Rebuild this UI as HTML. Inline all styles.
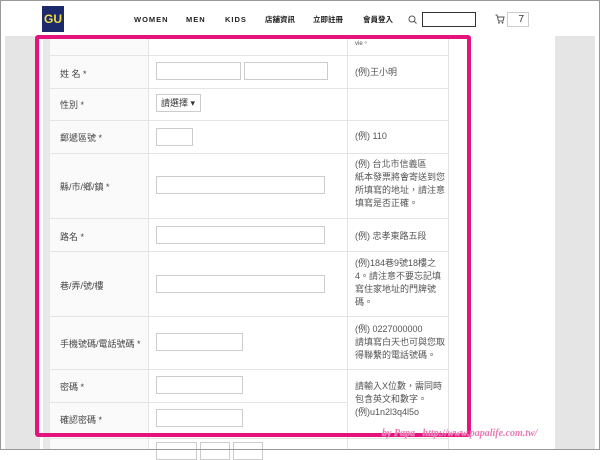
<!DOCTYPE html>
<html><head><meta charset="utf-8"><style>
*{margin:0;padding:0;box-sizing:border-box}
body{width:600px;height:450px;overflow:hidden;background:#fff;position:relative;font-family:"Liberation Sans","Noto Sans CJK TC",sans-serif;color:#444}
.a{position:absolute}
.frame{position:absolute;left:0;top:0;width:600px;height:450px;border:1px solid #999;pointer-events:none}
.nav{font-size:7.5px;font-weight:bold;color:#222;letter-spacing:1px}
.inp{position:absolute;border:1px solid #ccc;background:#fff;height:18px}
.l{position:absolute;font-size:9px;color:#444}
.e{position:absolute;font-size:9px;color:#555;line-height:13px}
.h{position:absolute;left:50px;width:398px;height:1px;background:#e4e4e4}
</style></head><body>
<div class="a" style="left:5px;top:36px;width:590px;height:414px;background:#e5e5e5"></div>
<div class="a" style="left:40px;top:36px;width:515px;height:414px;background:#fff"></div>
<div class="a" style="left:43px;top:36px;width:7px;height:414px;background:#e8e8e8"></div>
<div class="a" style="left:50px;top:36px;width:99px;height:414px;background:#fafafa"></div>
<div class="a" style="left:148px;top:36px;width:1px;height:414px;background:#e4e4e4"></div>
<div class="a" style="left:347px;top:36px;width:1px;height:414px;background:#e4e4e4"></div>
<div class="a" style="left:448px;top:36px;width:1px;height:414px;background:#e4e4e4"></div>
<div class="h" style="top:55px"></div><div class="h" style="top:88px"></div><div class="h" style="top:120px"></div><div class="h" style="top:153px"></div><div class="h" style="top:218px"></div><div class="h" style="top:251px"></div><div class="h" style="top:316px"></div><div class="h" style="top:369px"></div><div class="h" style="top:402px;width:298px"></div><div class="h" style="top:438px"></div>
<!-- header -->
<div class="a" style="left:42px;top:6px;width:22px;height:26px;background:#1c2a6b;color:#f0e040;font-weight:bold;font-size:12px;text-align:center;line-height:26px">GU</div>
<div class="a nav" style="left:134px;top:15px">WOMEN</div>
<div class="a nav" style="left:186px;top:15px">MEN</div>
<div class="a nav" style="left:225px;top:15px">KIDS</div>
<div class="a nav" style="left:265px;top:14px;letter-spacing:0">店舖資訊</div>
<div class="a nav" style="left:313px;top:14px;letter-spacing:0">立即註冊</div>
<div class="a nav" style="left:363px;top:14px;letter-spacing:0">會員登入</div>
<svg class="a" style="left:408px;top:15px" width="9" height="9"><circle cx="4" cy="4" r="3" fill="none" stroke="#555" stroke-width="1"/><path d="M6 6L8.5 8.5" stroke="#555"/></svg>
<div class="a" style="left:422px;top:12px;width:54px;height:15px;border:1px solid #333"></div>
<svg class="a" style="left:495px;top:14px" width="10" height="10"><path d="M0.5 1H2L3.5 7H8L9 3H3" fill="none" stroke="#555"/><circle cx="4" cy="8.8" r="0.9" fill="#555"/><circle cx="7.5" cy="8.8" r="0.9" fill="#555"/></svg>
<div class="a" style="left:507px;top:12px;width:22px;height:15px;border:1px solid #ccc;font-size:10px;text-align:right;padding-right:4px;line-height:13px;color:#333">7</div>
<!-- rows -->
<div class="e" style="left:355px;top:38px;font-size:6px">vie。</div>
<div class="l" style="left:60px;top:67px">姓 名 *</div>
<div class="inp" style="left:156px;top:62px;width:85px"></div><div class="inp" style="left:244px;top:62px;width:84px"></div>
<div class="e" style="left:355px;top:66px">(例)王小明</div>
<div class="l" style="left:60px;top:98px">性別 *</div>
<div class="inp" style="left:156px;top:94px;width:45px;font-size:9px;line-height:16px;padding-left:4px;color:#333">請選擇 ▾</div>
<div class="l" style="left:60px;top:131px">郵遞區號 *</div>
<div class="inp" style="left:156px;top:128px;width:37px"></div>
<div class="e" style="left:355px;top:130px">(例) 110</div>
<div class="l" style="left:60px;top:180px">縣/市/鄉/鎮 *</div>
<div class="inp" style="left:156px;top:176px;width:169px"></div>
<div class="e" style="left:355px;top:158px">(例) 台北市信義區<br>紙本發票將會寄送到您<br>所填寫的地址，請注意<br>填寫是否正確。</div>
<div class="l" style="left:60px;top:230px">路名 *</div>
<div class="inp" style="left:156px;top:226px;width:169px"></div>
<div class="e" style="left:355px;top:230px">(例) 忠孝東路五段</div>
<div class="l" style="left:60px;top:279px">巷/弄/號/樓</div>
<div class="inp" style="left:156px;top:275px;width:169px"></div>
<div class="e" style="left:355px;top:257px">(例)184巷9號18樓之<br>4。請注意不要忘記填<br>寫住家地址的門牌號<br>碼。</div>
<div class="l" style="left:60px;top:337px">手機號碼/電話號碼 *</div>
<div class="inp" style="left:156px;top:333px;width:87px"></div>
<div class="e" style="left:355px;top:323px">(例) 0227000000<br>請填寫白天也可與您取<br>得聯繫的電話號碼。</div>
<div class="l" style="left:60px;top:380px">密碼 *</div>
<div class="inp" style="left:156px;top:376px;width:87px"></div>
<div class="l" style="left:60px;top:413px">確認密碼 *</div>
<div class="inp" style="left:156px;top:409px;width:87px"></div>
<div class="e" style="left:355px;top:380px">請輸入X位數，需同時<br>包含英文和數字。<br>(例)u1n2l3q4l5o</div>
<div class="inp" style="left:156px;top:442px;width:41px"></div><div class="inp" style="left:200px;top:442px;width:30px"></div><div class="inp" style="left:233px;top:442px;width:30px"></div>
<!-- pink border -->
<div class="a" style="left:35px;top:35px;width:436px;height:402px;border:4px solid #e4137e;border-radius:3px"></div>
<div class="a" style="left:382px;top:428px;font-size:10px;font-style:italic;font-weight:bold;color:#e87ab4;font-family:'Liberation Serif',serif;text-shadow:0 0 1px #fff">by Papa &nbsp; http://www.papalife.com.tw/</div>
<div class="frame"></div>
</body></html>
